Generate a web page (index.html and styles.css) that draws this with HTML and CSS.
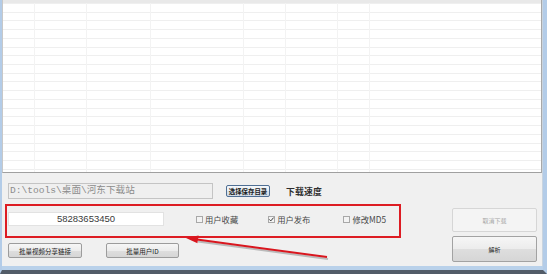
FILE: index.html
```html
<!DOCTYPE html>
<html lang="zh-CN">
<head>
<meta charset="utf-8">
<title>下载工具</title>
<link rel="stylesheet" href="styles.css">
</head>
<body>
<div class="window">
  <div class="client">
    <div class="list">
      <div class="list-head"></div>
      <div class="list-body">
        <div class="col c1"></div>
        <div class="col c2"></div>
        <div class="col c3"></div>
        <div class="col c4"></div>
        <div class="col c5"></div>
        <div class="col c6"></div>
        <div class="col c7"></div>
        <div class="col c8"></div>
      </div>
    </div>
    <div class="panel">
      <div class="main">
        <div class="row row-path">
          <div class="field field-path">D:\tools\桌面\河东下载站</div>
          <button class="btn btn-dir">选择保存目录</button>
          <span class="speed">下载速度</span>
        </div>
        <div class="row row-id">
          <div class="field field-id">58283653450</div>
          <label class="check check-1"><span class="box"></span>用户收藏</label>
          <label class="check check-2"><span class="box"><svg viewBox="0 0 7 7" width="7" height="7"><path d="M1.3 3.4 L2.8 4.9 L5.6 1.6" fill="none" stroke="#3a3a3a" stroke-width="1"/></svg></span>用户发布</label>
          <label class="check check-3"><span class="box"></span>修改MD5</label>
        </div>
        <div class="row row-batch">
          <button class="btn btn-batch">批量视频分享链接</button>
          <button class="btn btn-batch btn-batch-2">批量用户ID</button>
        </div>
      </div>
      <div class="actions">
        <button class="btn btn-action btn-cancel">取消下载</button>
        <button class="btn btn-action btn-parse">解析</button>
      </div>
    </div>
  </div>
  <div class="frame-bottom"></div>
</div>
<svg class="annot" width="547" height="274" viewBox="0 0 547 274">
  <rect x="6" y="205" width="394" height="32" fill="none" stroke="#dd1c23" stroke-width="2"/>
  <line x1="198" y1="241.5" x2="328" y2="259" stroke="#777" stroke-opacity="0.45" stroke-width="2"/>
  <line x1="197" y1="239.5" x2="327" y2="257" stroke="#d9161e" stroke-width="2"/>
  <polygon points="186,238 198.6,235.6 197.4,243.2" fill="#d9161e"/>
</svg>
</body>
</html>
```
FILE: styles.css
```css
html, body {
  margin: 0;
  padding: 0;
  width: 547px;
  height: 274px;
  overflow: hidden;
  background: #f0f0f0;
}

body {
  font-family: "Noto Sans CJK SC", "Liberation Sans", sans-serif;
}

.window {
  display: flex;
  flex-direction: column;
  width: 547px;
  height: 274px;
  box-sizing: border-box;
  border-left: 2px solid #b3cce8;
  border-right: 4px solid #b3cce8;
  border-bottom: 4px solid #525c68;
}

.client {
  flex: 1;
  display: flex;
  flex-direction: column;
  background: #f0f0f0;
  border-right: 1px solid #c9d4df;
}

.list {
  height: 173px;
  box-sizing: border-box;
  display: flex;
  flex-direction: column;
  background: #fff;
  border-left: 1px solid #c8c8c8;
  border-right: 1px solid #a8a8a8;
  border-bottom: 1px solid #a0a0a0;
}

.list-head {
  height: 3px;
  background: #e9e9e9;
}

.list-body {
  flex: 1;
  display: flex;
  background: repeating-linear-gradient(to bottom, #efefef 0, #efefef 1px, #ffffff 1px, #ffffff 8.72px);
}

.col {
  border-right: 1px solid #f3f3f3;
}

.c1 { width: 31px; }
.c2 { width: 51px; }
.c3 { width: 63px; }
.c4 { width: 92px; }
.c5 { width: 41px; }
.c6 { width: 51px; }
.c7 { width: 31px; }
.c8 { flex: 1; border-right: none; }

.panel {
  flex: 1;
  display: flex;
  padding: 0 5px 0 6px;
}

.main {
  flex: 1;
  display: flex;
  flex-direction: column;
}

.row {
  display: flex;
  align-items: center;
}

.row-path {
  margin-top: 10px;
  height: 16px;
}

.field {
  box-sizing: border-box;
  white-space: nowrap;
  overflow: hidden;
}

.field-path {
  width: 205px;
  height: 16px;
  border: 1px solid #c4c4c4;
  background: #efefef;
  color: #8c8c8c;
  font-family: "Liberation Mono", "Noto Sans CJK SC", monospace;
  font-size: 9.6px;
  line-height: 14px;
  padding-left: 1px;
}

.btn {
  box-sizing: border-box;
  margin: 0;
  padding: 0;
  font-family: "Noto Sans CJK SC", "Liberation Sans", sans-serif;
  font-size: 6.5px;
  color: #1c1c1c;
  border: 1px solid #9c9c9c;
  border-radius: 2px;
  background: linear-gradient(to bottom, #f6f6f6 0%, #ececec 50%, #dedede 50%, #d6d6d6 100%);
  display: flex;
  align-items: center;
  justify-content: center;
  white-space: nowrap;
}

.btn-dir {
  margin-left: 13px;
  width: 44px;
  height: 12px;
  border-color: #4f6f94;
  background: linear-gradient(to bottom, #f4f7fa 0%, #e6edf3 50%, #d8e2eb 50%, #d2dce6 100%);
  font-size: 6.4px;
  font-weight: bold;
}

.speed {
  margin-left: 16px;
  font-size: 8.8px;
  font-weight: bold;
  color: #2e2e2e;
  letter-spacing: 0.2px;
}

.row-id {
  margin-top: 13px;
  height: 14px;
}

.field-id {
  width: 156px;
  height: 14px;
  background: #ffffff;
  border: 1px solid #e2e2e2;
  text-align: center;
  font-family: "Liberation Sans", Arial, sans-serif;
  font-size: 9.5px;
  line-height: 12px;
  color: #3a3a3a;
}

.check {
  display: flex;
  align-items: center;
  gap: 2px;
  font-size: 8.3px;
  color: #484848;
}

.check .box {
  width: 7px;
  height: 7px;
  box-sizing: border-box;
  border: 1px solid #a8a8a8;
  background: #f3f3f3;
  display: block;
  position: relative;
}

.check .box svg {
  position: absolute;
  left: -1px;
  top: -1px;
}

.check-1 { margin-left: 32px; }
.check-2 { margin-left: 30px; }
.check-3 { margin-left: 33px; }

.row-batch {
  margin-top: 17px;
  height: 15px;
}

.btn-batch {
  width: 74px;
  height: 15px;
}

.btn-batch-2 {
  margin-left: 24px;
  width: 73px;
}

.actions {
  width: 85px;
  display: flex;
  flex-direction: column;
  padding-top: 35px;
  gap: 4px;
}

.btn-action {
  width: 85px;
}

.btn-cancel {
  height: 24px;
  color: #a6a6a6;
  border-color: #d6d6d6;
  background: #f4f4f4;
  font-size: 6px;
}

.btn-parse {
  height: 26px;
  border-color: #a2a2a2;
  font-size: 6px;
}

.frame-bottom {
  height: 4px;
  background: #b9d1ea;
}

.annot {
  position: absolute;
  left: 0;
  top: 0;
  pointer-events: none;
}
```
